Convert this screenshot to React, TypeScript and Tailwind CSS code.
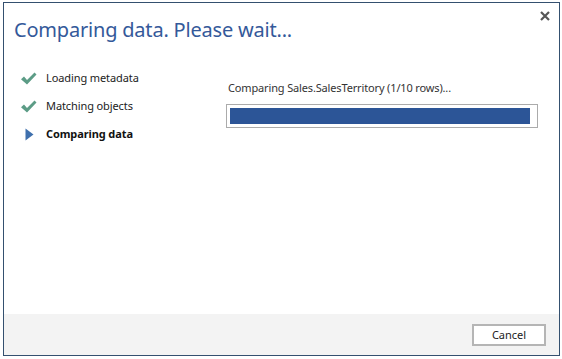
import React from "react";

function Check() {
  return (
    <svg width="17" height="15" viewBox="0 0 17 15">
      <path d="M1 8.2 L4 5.6 L7 9 L14.5 1.5 L16.5 3.6 L7 13.5 Z" fill="#5c9c86" />
    </svg>
  );
}

function Tri() {
  return (
    <svg width="9" height="13" viewBox="0 0 9 13">
      <path d="M0.5 0.5 L8.5 6.5 L0.5 12.5 Z" fill="#3f70ad" />
    </svg>
  );
}

export default function App() {
  const font = { fontFamily: '"Noto Sans", "Open Sans", sans-serif' };
  return (
    <div className="w-[562px] h-[359px] bg-white relative overflow-hidden" style={font}>
      <div className="absolute left-[3px] top-[2px] w-[557px] h-[354px] border border-[#34506f] bg-white flex flex-col">
        <div className="flex items-start justify-between h-[58px]">
          <div className="pl-[10px] pt-[14px] text-[20px] leading-[26px] text-[#34599a] tracking-[-0.2px]">
            Comparing data. Please wait...
          </div>
          <div className="pr-[9px] pt-[8px]">
            <svg width="10" height="10" viewBox="0 0 10 10">
              <path d="M1 1 L9 9 M9 1 L1 9" stroke="#555" strokeWidth="2.2" />
            </svg>
          </div>
        </div>
        <div className="flex flex-1">
          <div className="w-[224px] pl-[16px] pt-[9px] flex flex-col gap-[12px]">
            <div className="flex items-center h-[16px]">
              <div className="w-[26px]"><Check /></div>
              <span className="text-[11px] tracking-[-0.1px] text-[#222]">Loading metadata</span>
            </div>
            <div className="flex items-center h-[16px]">
              <div className="w-[26px]"><Check /></div>
              <span className="text-[11px] tracking-[-0.1px] text-[#222]">Matching objects</span>
            </div>
            <div className="flex items-center h-[16px]">
              <div className="w-[26px] pl-[5px]"><Tri /></div>
              <span className="text-[11px] tracking-[-0.1px] font-bold text-[#111]">Comparing data</span>
            </div>
          </div>
          <div className="flex-1 pt-[19px]">
            <div className="text-[11px] tracking-[-0.15px] text-[#333] leading-[16px]">
              Comparing Sales.SalesTerritory (1/10 rows)...
            </div>
            <div className="mt-[8px] ml-[-2px] w-[312px] h-[24px] border border-[#ababab] p-[3px] pr-[7px]">
              <div className="h-full w-full bg-[#2c5597]" />
            </div>
          </div>
        </div>
        <div className="h-[41px] bg-[#f3f3f3] flex items-center justify-end pr-[13px]">
          <button className="w-[74px] h-[22px] border-2 border-[#b5b5b5] bg-white text-[11px] text-[#222] leading-none">
            Cancel
          </button>
        </div>
      </div>
    </div>
  );
}
